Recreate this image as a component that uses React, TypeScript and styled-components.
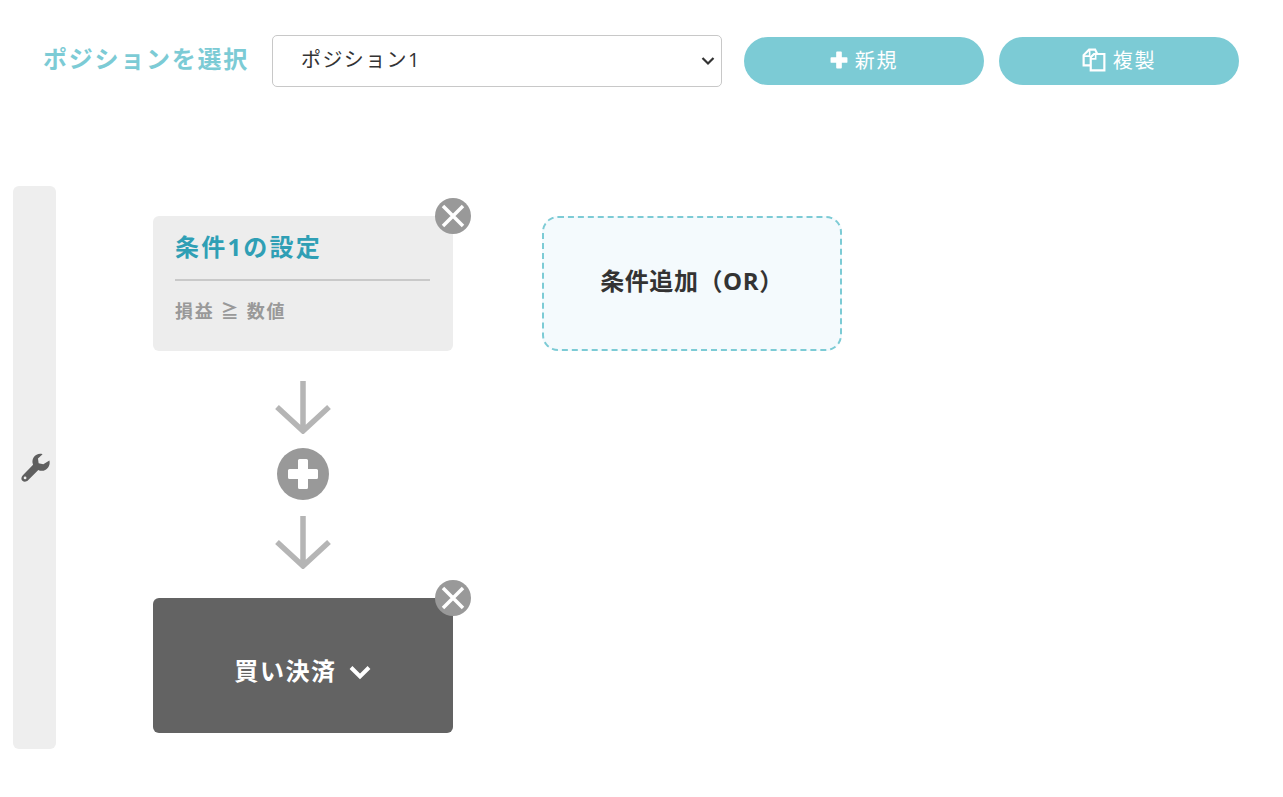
import React from "react";
import styled, { createGlobalStyle } from "styled-components";

const GlobalStyle = createGlobalStyle`
  body {
    margin: 0;
    background: #fff;
    font-family: "Open Sans", "Noto Sans CJK JP", sans-serif;
  }
`;

const Page = styled.div`
  width: 1283px;
  height: 797px;
  overflow: hidden;
`;

const Toolbar = styled.div`
  display: flex;
  align-items: center;
  height: 52px;
  padding: 35px 0 0 43px;
`;

const ToolbarLabel = styled.label`
  width: 229px;
  padding-bottom: 8px;
  font-size: 24px;
  font-weight: 700;
  letter-spacing: 1.75px;
  color: #7ccbd5;
  white-space: nowrap;
`;

const SelectWrap = styled.div`
  position: relative;
  width: 450px;
  height: 52px;
  margin-right: 22px;
`;

const PositionSelect = styled.select`
  appearance: none;
  width: 100%;
  height: 100%;
  padding: 0 28px 3px;
  border: 1px solid #c8c8c8;
  border-radius: 5px;
  background: #fff;
  color: #333;
  font-family: inherit;
  font-size: 20px;
  letter-spacing: 1.4px;
`;

const SelectChevron = styled.svg`
  position: absolute;
  top: 21px;
  right: 7px;
  width: 14px;
  height: 10px;
  pointer-events: none;
`;

const PillButton = styled.button`
  display: flex;
  align-items: center;
  justify-content: center;
  gap: 7px;
  width: 240px;
  height: 48px;
  margin-right: 15px;
  padding: 0 0 3px;
  border: none;
  border-radius: 24px;
  background: #7ccbd5;
  color: #fff;
  font-family: inherit;
  font-size: 20px;
  letter-spacing: 1.7px;
`;

const Workspace = styled.div`
  display: flex;
  margin: 99px 0 0 13px;
`;

const SideBar = styled.div`
  display: flex;
  align-items: center;
  justify-content: center;
  width: 43px;
  height: 563px;
  border-radius: 6px;
  background: #eee;
`;

const Canvas = styled.div`
  display: flex;
  align-items: flex-start;
  gap: 89px;
  padding: 30px 0 0 97px;
`;

const FlowColumn = styled.div`
  display: flex;
  flex-direction: column;
  align-items: center;
  width: 300px;
`;

const Card = styled.div`
  position: relative;
  box-sizing: border-box;
  width: 300px;
  height: 135px;
  border-radius: 6px;
  background: #ededed;
`;

const ActionCard = styled(Card)`
  margin-top: 29px;
  background: #636363;
`;

const ConditionBody = styled.div`
  padding: 13px 23px 0 22px;
`;

const ConditionTitle = styled.div`
  height: 35px;
  padding-bottom: 15px;
  border-bottom: 2px solid #c9c9c9;
  color: #2f9fb5;
  font-size: 24px;
  font-weight: 700;
  line-height: 35px;
  letter-spacing: 2.2px;
`;

const ConditionRule = styled.div`
  margin-top: 17px;
  color: #999;
  font-size: 18px;
  font-weight: 700;
  line-height: 26px;
  letter-spacing: 1.7px;
  white-space: pre;
`;

const ActionLabel = styled.div`
  display: flex;
  align-items: center;
  justify-content: center;
  gap: 11px;
  height: 100%;
  padding-top: 10px;
  padding-bottom: 2px;
  box-sizing: border-box;
  color: #fff;
  font-size: 24px;
  font-weight: 700;
  letter-spacing: 1.6px;
`;

const ActionChevron = styled.svg`
  width: 24px;
  height: 16px;
  margin-top: 4px;
`;

const CloseBadge = styled.button`
  position: absolute;
  top: -18px;
  right: -18px;
  display: flex;
  align-items: center;
  justify-content: center;
  width: 36px;
  height: 36px;
  padding: 0;
  border: none;
  border-radius: 50%;
  background: #999;
`;

const AddOrCard = styled.div`
  display: flex;
  align-items: center;
  justify-content: center;
  box-sizing: border-box;
  width: 300px;
  height: 135px;
  padding-bottom: 9px;
  border: 2px dashed #7ccbd5;
  border-radius: 16px;
  background: #f4fafd;
  color: #333;
  font-size: 24px;
  font-weight: 700;
  letter-spacing: 0.6px;
`;

const ArrowIcon = styled.svg<{ $top: number }>`
  display: block;
  width: 56px;
  height: 53px;
  margin-top: ${(p) => p.$top}px;
`;

const AddCircle = styled.button`
  display: flex;
  align-items: center;
  justify-content: center;
  width: 52px;
  height: 52px;
  margin-top: 14px;
  padding: 0;
  border: none;
  border-radius: 50%;
  background: #999;
`;

const CloseIcon = () => (
  <svg width="26" height="26" viewBox="0 0 26 26">
    <path d="M3 3 23 23M23 3 3 23" stroke="#fff" strokeWidth="3.500" fill="none" />
  </svg>
);

const FlowArrow = ({ top }: { top: number }) => (
  <ArrowIcon $top={top} viewBox="0 0 56 53">
    <path d="M28 0V49M2 26 28 50 54 26" stroke="#b5b5b5" strokeWidth="5.500" fill="none" />
  </ArrowIcon>
);

const PlusIcon = ({ size }: { size: number }) => (
  <svg width={size} height={size} viewBox="0 0 32 32">
    <path
      d="M11 2.500Q11 1 12.500 1h7Q21 1 21 2.500V11h8.500Q31 11 31 12.500v7Q31 21 29.500 21H21v8.500Q21 31 19.500 31h-7Q11 31 11 29.500V21H2.500Q1 21 1 19.500v-7Q1 11 2.500 11H11Z"
      fill="#fff"
    />
  </svg>
);

const CopyIcon = () => (
  <svg width="24" height="24" viewBox="0 0 22 22" fill="none" stroke="#fff" strokeWidth="2">
    <path d="M8 16H1.500V6.500L6.500 1.500H12L14 5.500" />
    <path d="M1.500 7.500H7V2" strokeWidth="1.500" />
    <path d="M8 8.500V20.500H20.500V5.500H11Z" />
    <path d="M8 10H12.500V5.500" strokeWidth="1.500" />
  </svg>
);

const WrenchIcon = () => (
  <svg width="32" height="32" viewBox="0 0 30 30">
    <path
      d="M28.500 8c.9 3.700-.7 7.300-3.900 8.900-2.200 1.100-4.500 1-6.500 0L8.500 26.600c-1.700 1.700-3.900 1.800-5.300.4s-1.300-3.600.4-5.300L13.200 12c-1-2.300-.8-4.900.6-7 1.800-2.700 5.100-3.900 8.300-3L17.800 6.200l.6 4.300 4.400.9Z"
      fill="#5f5f5f"
    />
    <circle cx="5.700" cy="24.300" r="1.300" fill="#eee" />
  </svg>
);

export default function App() {
  return (
    <Page>
      <GlobalStyle />
      <Toolbar>
        <ToolbarLabel>ポジションを選択</ToolbarLabel>
        <SelectWrap>
          <PositionSelect defaultValue="1">
            <option value="1">ポジション1</option>
          </PositionSelect>
          <SelectChevron viewBox="0 0 14 10">
            <path d="M1.500 2 7 7.500 12.500 2" stroke="#333" strokeWidth="2.200" fill="none" />
          </SelectChevron>
        </SelectWrap>
        <PillButton>
          <PlusIcon size={18} />
          新規
        </PillButton>
        <PillButton>
          <CopyIcon />
          複製
        </PillButton>
      </Toolbar>
      <Workspace>
        <SideBar>
          <WrenchIcon />
        </SideBar>
        <Canvas>
          <FlowColumn>
            <Card>
              <ConditionBody>
                <ConditionTitle>条件1の設定</ConditionTitle>
                <ConditionRule>損益 ≧ 数値</ConditionRule>
              </ConditionBody>
              <CloseBadge>
                <CloseIcon />
              </CloseBadge>
            </Card>
            <FlowArrow top={30} />
            <AddCircle>
              <PlusIcon size={32} />
            </AddCircle>
            <FlowArrow top={16} />
            <ActionCard>
              <ActionLabel>
                買い決済
                <ActionChevron viewBox="0 0 24 16">
                  <path d="M3 3.500 12 12.500 21 3.500" stroke="#fff" strokeWidth="4" fill="none" />
                </ActionChevron>
              </ActionLabel>
              <CloseBadge>
                <CloseIcon />
              </CloseBadge>
            </ActionCard>
          </FlowColumn>
          <AddOrCard>条件追加（OR）</AddOrCard>
        </Canvas>
      </Workspace>
    </Page>
  );
}
